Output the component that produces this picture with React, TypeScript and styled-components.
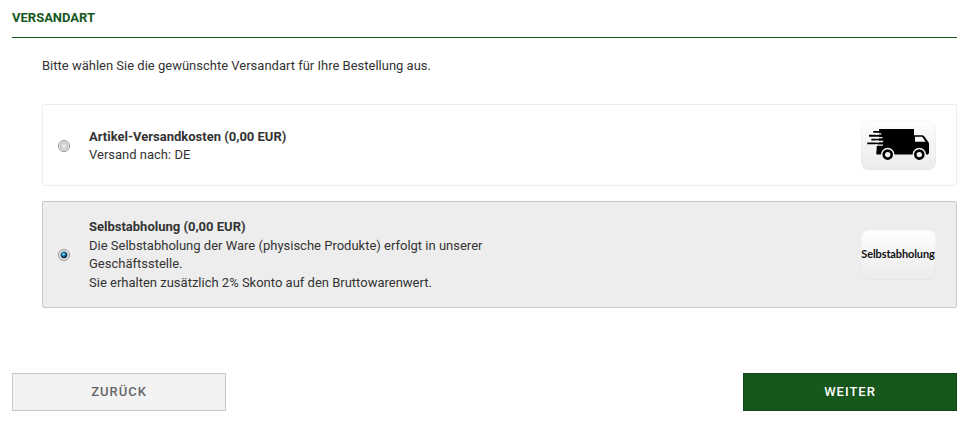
import React, { useState } from "react";
import styled, { createGlobalStyle, css } from "styled-components";

const GlobalStyle = createGlobalStyle`
  *, *::before, *::after { box-sizing: border-box; }
  body {
    margin: 0;
    background: #fff;
    color: #333;
    font: 13px/18.57px Roboto, "Liberation Sans", sans-serif;
  }
`;

const Page = styled.main`
  width: 974px;
  height: 426px;
  padding: 0 17px 15px 12px;
  display: flex;
  flex-direction: column;
`;

const Heading = styled.h1`
  margin: 0;
  height: 38px;
  padding-top: 9px;
  border-bottom: 1px solid #17571b;
  color: #17571b;
  font-size: 13px;
  font-weight: 700;
  text-transform: uppercase;
`;

const Intro = styled.p`
  margin: 19px 0 28px 30px;
  height: 19px;
`;

const Options = styled.div`
  margin-left: 30px;
  display: flex;
  flex-direction: column;
  gap: 15px;
`;

const Option = styled.label<{ $selected: boolean; $height: number }>`
  display: flex;
  align-items: center;
  height: ${(p) => p.$height}px;
  padding: 0 20px 0 15px;
  border: 1px solid ${(p) => (p.$selected ? "#c8c8c8" : "#ededed")};
  border-radius: 2px;
  background: ${(p) => (p.$selected ? "#ededed" : "#fff")};
`;

const Radio = styled.input`
  appearance: none;
  flex: none;
  width: 12px;
  height: 12px;
  margin: 1px 19px 0 0;
  border: 1px solid #8e8f8f;
  border-radius: 50%;
  background: radial-gradient(circle at 50% 50%, #e6e8ea 0, #d8dbde 2.5px, #b9bcc0 3.6px, #f4f4f4 4.4px);

  &:checked {
    background:
      radial-gradient(circle at 45% 42%, #8fdcf8 0, #2a9bd0 1.4px, rgba(18, 63, 98, 0) 2.6px),
      radial-gradient(circle at 50% 50%, #123f62 0, #1b3f5a 3px, #f4f4f4 4px);
  }
`;

const Description = styled.div<{ $offset: number }>`
  width: 430px;
  padding-top: ${(p) => p.$offset}px;
  white-space: pre-line;
`;

const Title = styled.strong`
  display: block;
  font-weight: 700;
`;

const Thumb = styled.span`
  flex: none;
  display: flex;
  align-items: center;
  justify-content: center;
  width: 75px;
  height: 50px;
  margin-left: auto;
  border-radius: 8px;
  background: linear-gradient(#fefefe, #ebebeb);
  box-shadow: inset 0 0 0 1px rgba(0, 0, 0, 0.025);
`;

const ThumbText = styled.span`
  color: #111;
  font: 700 11px/14px Lato, sans-serif;
  letter-spacing: -0.12px;
  white-space: nowrap;
  padding: 0 1px 1px 0;
`;

const Actions = styled.div`
  margin-top: auto;
  display: flex;
  justify-content: space-between;
`;

const Button = styled.button<{ $primary?: boolean }>`
  width: 214px;
  height: 38px;
  padding: 0;
  border: 1px solid #c8c8c8;
  background: #f2f2f2;
  color: #666;
  font: 500 13px/18px Roboto, "Liberation Sans", sans-serif;
  letter-spacing: 1px;
  text-transform: uppercase;
  ${(p) =>
    p.$primary &&
    css`
      border-color: #124715;
      background: #17571b;
      color: #fff;
    `}
`;

const Van = () => (
  <svg width="75" height="50" viewBox="0 0 75 50" aria-hidden="true">
    <path d="M18 9h35v6.2h8.2q1.2 0 2 1l3.7 5.2q1.1 1 1.1 2.3V33l-1 1.5H16q-.8 0-.7-1l.6-8.3 2.1-2z" />
    <path d="M54 16.8h6.6q.7 0 1.1.6l2.9 4.4H54z" fill="#f8f8f8" />
    <path d="M12.2 11.9H22M8 15.8h14M10.3 19.6H22M6.3 23.4H22" stroke="#000" strokeWidth="1.9" />
    <path d="M14.5 13.9h5.8M14 17.7h7.4M14 21.5h8.2M14 25.2h8" stroke="#f8f8f8" strokeWidth="1.3" />
    <path d="M20 36v-1.5a6.7 6.7 0 0 1 13.4 0V36zM51.6 36v-1.5a6.7 6.7 0 0 1 13.4 0V36z" fill="#f4f4f4" />
    <circle cx="26.7" cy="34.6" r="4" fill="#f3f3f3" stroke="#000" strokeWidth="2.6" />
    <circle cx="58.3" cy="34.6" r="4" fill="#f3f3f3" stroke="#000" strokeWidth="2.6" />
  </svg>
);

const methods = [
  {
    id: "shipping",
    height: 82,
    offset: 2.4,
    title: "Artikel-Versandkosten (0,00 EUR)",
    text: "Versand nach: DE",
    picture: <Van />,
  },
  {
    id: "pickup",
    height: 107,
    offset: 1.6,
    title: "Selbstabholung (0,00 EUR)",
    text: "Die Selbstabholung der Ware (physische Produkte) erfolgt in unserer Geschäftsstelle.\nSie erhalten zusätzlich 2% Skonto auf den Bruttowarenwert.",
    picture: <ThumbText>Selbstabholung</ThumbText>,
  },
];

export default function App() {
  const [selected, setSelected] = useState("pickup");
  return (
    <>
      <GlobalStyle />
      <Page>
        <Heading>Versandart</Heading>
        <Intro>Bitte wählen Sie die gewünschte Versandart für Ihre Bestellung aus.</Intro>
        <Options>
          {methods.map((m) => (
            <Option key={m.id} $selected={selected === m.id} $height={m.height}>
              <Radio
                type="radio"
                name="shipping-method"
                checked={selected === m.id}
                onChange={() => setSelected(m.id)}
              />
              <Description $offset={m.offset}>
                <Title>{m.title}</Title>
                {m.text}
              </Description>
              <Thumb>{m.picture}</Thumb>
            </Option>
          ))}
        </Options>
        <Actions>
          <Button type="button">Zurück</Button>
          <Button type="button" $primary>Weiter</Button>
        </Actions>
      </Page>
    </>
  );
}
